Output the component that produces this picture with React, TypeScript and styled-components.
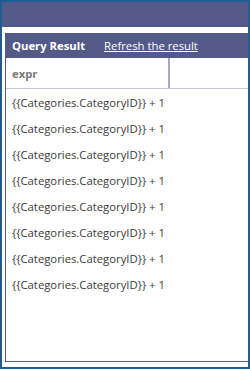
import styled, { createGlobalStyle } from "styled-components"

const GlobalStyle = createGlobalStyle`
  html, body {
    margin: 0;
    padding: 0;
    background: #fff;
  }
  body {
    font-family: "Open Sans", "Noto Sans", sans-serif;
  }
`

const Frame = styled.div`
  width: 250px;
  height: 369px;
  box-sizing: border-box;
  border: 2px solid #1d5e95;
  display: flex;
  flex-direction: column;
  overflow: hidden;
`

const TopBand = styled.div`
  height: 25px;
  background: #545a87;
  flex-shrink: 0;
`

const Panel = styled.div`
  margin: 6px 0 5px 3px;
  flex: 1;
  border-left: 1px solid #545a87;
  border-bottom: 1px solid #545a87;
  display: flex;
  flex-direction: column;
`

const PanelHeader = styled.div`
  height: 25px;
  background: #545a87;
  display: flex;
  align-items: center;
  gap: 19px;
  padding-left: 6px;
  color: #fff;
  font-size: 11.3px;
  flex-shrink: 0;
`

const Title = styled.span`
  font-weight: 700;
`

const RefreshLink = styled.a`
  color: #fff;
  text-decoration: underline;
  cursor: pointer;
`

const HeadRow = styled.div`
  height: 30px;
  display: grid;
  grid-template-columns: 164px 1fr;
  border-bottom: 1px solid #c9cad8;
`

const HeadCell = styled.div<{ $divider?: boolean }>`
  display: flex;
  align-items: center;
  padding-left: 6px;
  font-size: 11.3px;
  font-weight: 700;
  color: #7a7a7a;
  border-right: ${p => (p.$divider ? "2px solid #a7a9c4" : "none")};
`

const Row = styled.div`
  height: 26px;
  display: flex;
  align-items: center;
  padding-left: 6px;
  font-size: 11.3px;
  color: #3a3a3a;
`

const rows = Array.from({ length: 8 }, () => "{{Categories.CategoryID}} + 1")

const App = () => {
  return (
    <Frame>
      <GlobalStyle />
      <TopBand />
      <Panel>
        <PanelHeader>
          <Title>Query Result</Title>
          <RefreshLink>Refresh the result</RefreshLink>
        </PanelHeader>
        <HeadRow>
          <HeadCell $divider>expr</HeadCell>
          <HeadCell />
        </HeadRow>
        {rows.map((r, i) => (
          <Row key={i}>{r}</Row>
        ))}
      </Panel>
    </Frame>
  )
}

export default App
